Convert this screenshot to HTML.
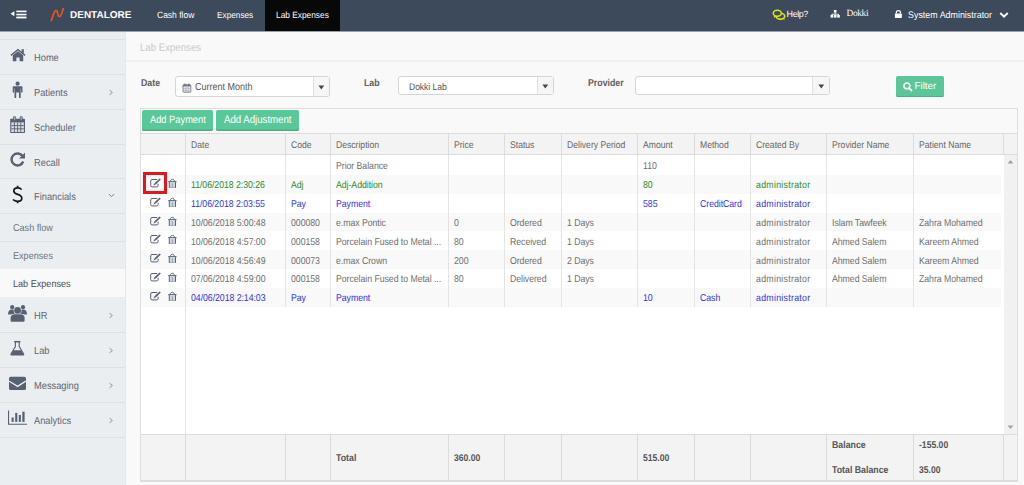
<!DOCTYPE html>
<html><head><meta charset="utf-8"><title>Lab Expenses</title>
<style>
html,body{margin:0;padding:0;width:1024px;height:485px;overflow:hidden;background:#f9f9f9;font-family:"Liberation Sans",sans-serif;}
.t{position:absolute;white-space:nowrap;text-rendering:geometricPrecision;}
.r{position:absolute;}
</style></head><body>
<div class="r" style="left:0px;top:0px;width:1024px;height:31px;background:#3d4a5c"></div>
<div class="r" style="left:0px;top:31px;width:1024px;height:1px;background:#94a0ac"></div>
<svg class="r" style="left:10px;top:10px" width="18" height="10" viewBox="0 0 18 10"><path d="M0.6 3.7 L4.4 1.2 L4.4 6.2 Z" fill="#fff"/><rect x="6.3" y="0.6" width="10.2" height="1.6" fill="#fff"/><rect x="6.3" y="3.75" width="10.2" height="1.6" fill="#fff"/><rect x="6.3" y="6.6" width="10.2" height="1.8" fill="#fff"/></svg>
<svg class="r" style="left:49px;top:6px" width="16" height="17" viewBox="0 0 16 17"><path d="M2.3 14.6 C3.6 11.2 4.6 7.4 5.8 5.4 C6.6 4.2 7.8 4.2 8.3 5.6 C8.9 7.4 8.7 10.4 10.3 10.5 C12.2 10.6 13.2 6.4 14.2 2.6" stroke="#e8561c" stroke-width="1.7" fill="none" stroke-linecap="round"/></svg>
<div class="t" style="left:70.00px;top:8.54px;font-size:10.00px;line-height:14px;color:#fff;font-weight:700;font-family:'Liberation Sans', sans-serif;letter-spacing:0.000px;">DENTALORE</div>
<div class="t" style="left:156.50px;top:7.95px;font-size:9.10px;line-height:14px;color:#fff;font-weight:400;font-family:'Liberation Sans', sans-serif;letter-spacing:0.000px;transform:scaleX(0.9346);transform-origin:0 0;">Cash flow</div>
<div class="t" style="left:217.00px;top:8.04px;font-size:8.83px;line-height:14px;color:#fff;font-weight:400;font-family:'Liberation Sans', sans-serif;letter-spacing:0.000px;transform:scaleX(0.9346);transform-origin:0 0;">Expenses</div>
<div class="r" style="left:265px;top:0px;width:75px;height:31px;background:#080808"></div>
<div class="t" style="left:276.00px;top:8.00px;font-size:8.93px;line-height:14px;color:#fff;font-weight:400;font-family:'Liberation Sans', sans-serif;letter-spacing:0.000px;transform:scaleX(0.9346);transform-origin:0 0;">Lab Expenses</div>
<svg class="r" style="left:772px;top:9px" width="15" height="12" viewBox="0 0 15 12"><ellipse cx="8.4" cy="7.2" rx="4.3" ry="2.9" fill="none" stroke="#e2e619" stroke-width="1.6"/><path d="M10.6 9.6 L12.6 11.2 L12 8.6Z" fill="#e2e619"/><ellipse cx="5.3" cy="4.3" rx="4" ry="3" fill="#3d4a5c" stroke="#e2e619" stroke-width="1.5"/><path d="M2.4 6.6 L1.6 9 L4.4 7.4Z" fill="#e2e619"/></svg>
<div class="t" style="left:786.60px;top:7.28px;font-size:9.00px;line-height:14px;color:#fff;font-weight:400;font-family:'Liberation Sans', sans-serif;letter-spacing:-0.450px;">Help?</div>
<svg class="r" style="left:830px;top:9px" width="11" height="10" viewBox="0 0 11 10"><rect x="3.9" y="1" width="2.6" height="2.6" fill="#fff"/><path d="M5.2 3.6 V5.2 M1.9 6.6 V5.2 H8.5 V6.6" stroke="#fff" stroke-width="0.9" fill="none"/><rect x="0.6" y="6" width="2.6" height="2.6" fill="#fff"/><rect x="3.9" y="6" width="2.6" height="2.6" fill="#fff"/><rect x="7.2" y="6" width="2.6" height="2.6" fill="#fff"/></svg>
<div class="t" style="left:846.50px;top:7.24px;font-size:9.40px;line-height:14px;color:#fff;font-weight:400;font-family:'Liberation Serif', serif;letter-spacing:-0.350px;">Dokki</div>
<svg class="r" style="left:894px;top:9px" width="9" height="10" viewBox="0 0 9 10"><path d="M2.4 4.4 V3.2 C2.4 1.2 6.4 1.2 6.4 3.2 V4.4" stroke="#fff" stroke-width="1.3" fill="none"/><rect x="0.9" y="4.4" width="7" height="4.5" rx="0.6" fill="#fff"/></svg>
<div class="t" style="left:908.00px;top:8.70px;font-size:9.52px;line-height:14px;color:#fff;font-weight:400;font-family:'Liberation Sans', sans-serif;letter-spacing:0.000px;transform:scaleX(0.9346);transform-origin:0 0;">System Administrator</div>
<svg class="r" style="left:999px;top:11px" width="10" height="8" viewBox="0 0 10 8"><path d="M1.3 2 L5 5.6 L8.7 2" stroke="#fff" stroke-width="2" fill="none"/></svg>
<div class="r" style="left:0px;top:32px;width:126px;height:453px;background:#eaeef0"></div>
<div class="r" style="left:125px;top:32px;width:1px;height:453px;background:#e4e8ea"></div>
<div class="r" style="left:0px;top:39px;width:125px;height:1px;background:#dbe1e4"></div>
<div class="r" style="left:0px;top:74px;width:125px;height:1px;background:#dbe1e4"></div>
<div class="r" style="left:0px;top:109px;width:125px;height:1px;background:#dbe1e4"></div>
<div class="r" style="left:0px;top:144px;width:125px;height:1px;background:#dbe1e4"></div>
<div class="r" style="left:0px;top:178px;width:125px;height:1px;background:#dbe1e4"></div>
<div class="r" style="left:0px;top:213px;width:125px;height:1px;background:#dbe1e4"></div>
<div class="r" style="left:0px;top:241px;width:125px;height:1px;background:#dbe1e4"></div>
<div class="r" style="left:0px;top:332px;width:125px;height:1px;background:#dbe1e4"></div>
<div class="r" style="left:0px;top:367px;width:125px;height:1px;background:#dbe1e4"></div>
<div class="r" style="left:0px;top:402px;width:125px;height:1px;background:#dbe1e4"></div>
<div class="r" style="left:0px;top:437px;width:125px;height:1px;background:#dbe1e4"></div>
<div class="t" style="left:33.50px;top:51.66px;font-size:10.23px;line-height:14px;color:#5d6674;font-weight:400;font-family:'Liberation Sans', sans-serif;letter-spacing:0.000px;transform:scaleX(0.9091);transform-origin:0 0;">Home</div>
<div class="t" style="left:33.50px;top:86.66px;font-size:10.23px;line-height:14px;color:#5d6674;font-weight:400;font-family:'Liberation Sans', sans-serif;letter-spacing:0.000px;transform:scaleX(0.9091);transform-origin:0 0;">Patients</div>
<div class="t" style="left:33.50px;top:121.66px;font-size:10.23px;line-height:14px;color:#5d6674;font-weight:400;font-family:'Liberation Sans', sans-serif;letter-spacing:0.000px;transform:scaleX(0.9091);transform-origin:0 0;">Scheduler</div>
<div class="t" style="left:33.50px;top:156.66px;font-size:10.23px;line-height:14px;color:#5d6674;font-weight:400;font-family:'Liberation Sans', sans-serif;letter-spacing:0.000px;transform:scaleX(0.9091);transform-origin:0 0;">Recall</div>
<div class="t" style="left:33.50px;top:190.66px;font-size:10.23px;line-height:14px;color:#5d6674;font-weight:400;font-family:'Liberation Sans', sans-serif;letter-spacing:0.000px;transform:scaleX(0.9091);transform-origin:0 0;">Financials</div>
<svg class="r" style="left:108px;top:89px" width="6" height="7" viewBox="0 0 6 7"><path d="M1.6 1.2 L4.4 3.5 L1.6 5.8" stroke="#8a939e" stroke-width="1" fill="none"/></svg>
<svg class="r" style="left:108px;top:193px" width="7" height="5" viewBox="0 0 7 5"><path d="M1 1 L3.5 3.8 L6 1" stroke="#7d8794" stroke-width="1" fill="none"/></svg>
<div class="t" style="left:12.50px;top:222.43px;font-size:10.01px;line-height:14px;color:#6b737e;font-weight:400;font-family:'Liberation Sans', sans-serif;letter-spacing:0.000px;transform:scaleX(0.9091);transform-origin:0 0;">Cash flow</div>
<div class="t" style="left:12.50px;top:250.43px;font-size:10.01px;line-height:14px;color:#6b737e;font-weight:400;font-family:'Liberation Sans', sans-serif;letter-spacing:0.000px;transform:scaleX(0.9091);transform-origin:0 0;">Expenses</div>
<div class="r" style="left:0px;top:269px;width:125px;height:28px;background:#f9f9f9"></div>
<div class="t" style="left:12.50px;top:277.53px;font-size:10.01px;line-height:14px;color:#4a4f57;font-weight:400;font-family:'Liberation Sans', sans-serif;letter-spacing:0.000px;transform:scaleX(0.9091);transform-origin:0 0;">Lab Expenses</div>
<div class="t" style="left:33.50px;top:309.66px;font-size:10.23px;line-height:14px;color:#5d6674;font-weight:400;font-family:'Liberation Sans', sans-serif;letter-spacing:0.000px;transform:scaleX(0.9091);transform-origin:0 0;">HR</div>
<svg class="r" style="left:108px;top:312px" width="6" height="7" viewBox="0 0 6 7"><path d="M1.6 1.2 L4.4 3.5 L1.6 5.8" stroke="#8a939e" stroke-width="1" fill="none"/></svg>
<div class="t" style="left:33.50px;top:344.66px;font-size:10.23px;line-height:14px;color:#5d6674;font-weight:400;font-family:'Liberation Sans', sans-serif;letter-spacing:0.000px;transform:scaleX(0.9091);transform-origin:0 0;">Lab</div>
<svg class="r" style="left:108px;top:347px" width="6" height="7" viewBox="0 0 6 7"><path d="M1.6 1.2 L4.4 3.5 L1.6 5.8" stroke="#8a939e" stroke-width="1" fill="none"/></svg>
<div class="t" style="left:33.50px;top:379.66px;font-size:10.23px;line-height:14px;color:#5d6674;font-weight:400;font-family:'Liberation Sans', sans-serif;letter-spacing:0.000px;transform:scaleX(0.9091);transform-origin:0 0;">Messaging</div>
<svg class="r" style="left:108px;top:382px" width="6" height="7" viewBox="0 0 6 7"><path d="M1.6 1.2 L4.4 3.5 L1.6 5.8" stroke="#8a939e" stroke-width="1" fill="none"/></svg>
<div class="t" style="left:33.50px;top:414.66px;font-size:10.23px;line-height:14px;color:#5d6674;font-weight:400;font-family:'Liberation Sans', sans-serif;letter-spacing:0.000px;transform:scaleX(0.9091);transform-origin:0 0;">Analytics</div>
<svg class="r" style="left:108px;top:417px" width="6" height="7" viewBox="0 0 6 7"><path d="M1.6 1.2 L4.4 3.5 L1.6 5.8" stroke="#8a939e" stroke-width="1" fill="none"/></svg>
<svg class="r" style="left:10px;top:48px" width="16" height="14" viewBox="0 0 16 14"><path d="M0.5 6.8 L8 0.8 L15.5 6.8 L14.6 7.9 L8 2.6 L1.4 7.9Z" fill="#576171"/><rect x="11.6" y="1.2" width="2.2" height="3.8" fill="#576171"/><path d="M2.8 7.2 L8 3.2 L13.2 7.2 V13.2 H9.6 V9.4 H6.4 V13.2 H2.8Z" fill="#576171"/></svg>
<svg class="r" style="left:12px;top:81px" width="11" height="18" viewBox="0 0 11 18"><circle cx="5.6" cy="2.7" r="2.1" fill="#576171"/><path d="M1.8 5.2 H9.4 C10.1 5.2 10.5 5.6 10.5 6.3 V11.1 C10.5 11.5 10.2 11.7 9.8 11.7 C9.4 11.7 9.1 11.5 9.1 11.1 V7.6 H8.7 V16.4 C8.7 16.8 8.4 17 7.9 17 C7.4 17 7 16.8 7 16.4 V11.6 H4.2 V16.4 C4.2 16.8 3.9 17 3.4 17 C2.9 17 2.5 16.8 2.5 16.4 V7.6 H2.1 V11.1 C2.1 11.5 1.8 11.7 1.4 11.7 C1 11.7 0.7 11.5 0.7 11.1 V6.3 C0.7 5.6 1.1 5.2 1.8 5.2Z" fill="#576171"/></svg>
<svg class="r" style="left:9px;top:116px" width="17" height="18" viewBox="0 0 17 18"><rect x="1.2" y="2.8" width="14.8" height="14.2" rx="0.8" fill="#576171"/><rect x="2.3" y="6.4" width="12.6" height="9.6" fill="#d8dde2"/><path d="M2.3 9.6 H14.9 M2.3 12.8 H14.9 M5.45 6.4 V16 M8.6 6.4 V16 M11.75 6.4 V16" stroke="#576171" stroke-width="0.9"/><rect x="4.4" y="0.4" width="2.2" height="4.2" rx="1" fill="#9aa3ae" stroke="#576171" stroke-width="0.8"/><rect x="11.1" y="0.4" width="2.2" height="4.2" rx="1" fill="#9aa3ae" stroke="#576171" stroke-width="0.8"/></svg>
<svg class="r" style="left:10px;top:152px" width="16" height="15" viewBox="0 0 16 15"><path d="M12.6 4.2 A6 6 0 1 0 13.2 9.5" stroke="#576171" stroke-width="2.4" fill="none"/><path d="M15 0.6 V6.6 H9Z" fill="#576171"/></svg>
<svg class="r" style="left:12px;top:185px" width="11" height="19" viewBox="0 0 11 19"><path d="M9.6 4.6 C8.8 3.4 7.4 2.9 5.7 2.9 C3.3 2.9 1.8 4.1 1.8 5.9 C1.8 8 3.6 8.7 5.7 9.4 C7.9 10.1 9.8 10.9 9.8 13.2 C9.8 15.2 8.1 16.3 5.6 16.3 C3.7 16.3 2 15.7 1 14.5 M5.6 0.8 V2.9 M5.6 16.3 V18.2" stroke="#151515" stroke-width="1.7" fill="none"/></svg>
<svg class="r" style="left:8px;top:304px" width="19" height="18" viewBox="0 0 19 18"><circle cx="4.2" cy="3.2" r="2.1" fill="#576171"/><circle cx="15" cy="3.2" r="2.1" fill="#576171"/><path d="M0 10.6 C0 7.3 1.5 5.6 3.5 5.6 H4.8 C6.6 5.6 7.2 7 7.2 8.5 V10.6 Z" fill="#576171"/><path d="M19 10.6 C19 7.3 17.5 5.6 15.5 5.6 H14.2 C12.4 5.6 11.8 7 11.8 8.5 V10.6Z" fill="#576171"/><circle cx="9.6" cy="6.5" r="3.4" fill="#576171" stroke="#eaeef0" stroke-width="1.1" paint-order="stroke"/><path d="M2.6 16.4 V13.8 C2.6 11.6 4.4 10.2 6.6 10.2 H12.6 C14.8 10.2 16.6 11.6 16.6 13.8 V16.4 C16.6 17.2 16.1 17.8 15.2 17.8 H4 C3.1 17.8 2.6 17.2 2.6 16.4Z" fill="#576171" stroke="#eaeef0" stroke-width="1.1" paint-order="stroke"/></svg>
<svg class="r" style="left:10px;top:340px" width="15" height="16" viewBox="0 0 15 16"><path d="M4.2 1.7 H10.4" stroke="#576171" stroke-width="1.5"/><path d="M5.4 1.8 V6.6 L1.1 13.8 C0.7 14.5 1 15 1.8 15 H12.8 C13.6 15 13.9 14.5 13.5 13.8 L9.2 6.6 V1.8" stroke="#576171" stroke-width="1.1" fill="none"/><path d="M3.5 10.2 H11.1 L13.8 14.6 C13.8 14.9 13.5 15.1 13 15.1 H1.6 C1.1 15.1 0.8 14.9 0.8 14.6Z" fill="#576171"/></svg>
<svg class="r" style="left:9px;top:376px" width="17" height="15" viewBox="0 0 17 15"><rect x="0" y="0.8" width="17" height="13.3" rx="1.6" fill="#576171"/><path d="M0.2 5.2 L8.6 10.4 L16.8 5" stroke="#eaeef0" stroke-width="1.3" fill="none"/></svg>
<svg class="r" style="left:8px;top:410px" width="20" height="15" viewBox="0 0 20 15"><path d="M0.55 0.6 V14.2 H19" stroke="#576171" stroke-width="1.1" fill="none"/><rect x="3.6" y="7.5" width="2.1" height="4.4" fill="#576171"/><rect x="7.2" y="2.9" width="2.1" height="9" fill="#576171"/><rect x="10.8" y="5" width="2.1" height="6.9" fill="#576171"/><rect x="14.3" y="1.7" width="2.3" height="10.2" fill="#576171"/></svg>
<div class="r" style="left:126px;top:32px;width:898px;height:453px;background:#f9f9f9"></div>
<div class="t" style="left:139.60px;top:40.52px;font-size:10.90px;line-height:14px;color:#c9c9c9;font-weight:400;font-family:'Liberation Sans', sans-serif;letter-spacing:0.000px;transform:scaleX(0.8850);transform-origin:0 0;">Lab Expenses</div>
<div class="r" style="left:126px;top:60px;width:898px;height:1px;background:#efefef"></div>
<div class="r" style="left:126px;top:61px;width:898px;height:1px;background:#f1f1f1"></div>
<div class="t" style="left:140.50px;top:76.95px;font-size:9.94px;line-height:14px;color:#606060;font-weight:700;font-family:'Liberation Sans', sans-serif;letter-spacing:0.000px;transform:scaleX(0.8850);transform-origin:0 0;">Date</div>
<div class="r" style="left:175px;top:76px;width:155px;height:21px;background:#fff;border:1px solid #d5d5d5;border-radius:3px;box-sizing:border-box"></div>
<div class="r" style="left:313px;top:77px;width:16px;height:19px;background:#f6f6f6;border-left:1px solid #e0e0e0;border-radius:0 2px 2px 0;box-sizing:border-box"></div>
<svg class="r" style="left:318px;top:84.5px" width="7" height="5" viewBox="0 0 7 5"><path d="M0.4 0.4 H6.2 L3.3 4.6Z" fill="#3d4756"/></svg>
<svg class="r" style="left:182px;top:83px" width="10" height="10" viewBox="0 0 10 10"><rect x="1" y="1.8" width="7.8" height="7.4" rx="0.6" fill="#f4f4f6" stroke="#6f7580" stroke-width="0.9"/><rect x="1" y="1.8" width="7.8" height="1.6" fill="#6f7580"/><path d="M1.3 5.4 H8.5 M1.3 7.3 H8.5 M3.3 3.4 V9 M4.9 3.4 V9 M6.5 3.4 V9" stroke="#a4a9b2" stroke-width="0.6"/><rect x="2.4" y="0.5" width="1.1" height="2" fill="#6f7580"/><rect x="6.3" y="0.5" width="1.1" height="2" fill="#6f7580"/></svg>
<div class="t" style="left:194.50px;top:80.68px;font-size:10.17px;line-height:14px;color:#555;font-weight:400;font-family:'Liberation Sans', sans-serif;letter-spacing:0.000px;transform:scaleX(0.8850);transform-origin:0 0;">Current Month</div>
<div class="t" style="left:364.00px;top:76.95px;font-size:9.94px;line-height:14px;color:#606060;font-weight:700;font-family:'Liberation Sans', sans-serif;letter-spacing:0.000px;transform:scaleX(0.8850);transform-origin:0 0;">Lab</div>
<div class="r" style="left:398px;top:76px;width:156px;height:19px;background:#fff;border:1px solid #d5d5d5;border-radius:3px;box-sizing:border-box"></div>
<div class="r" style="left:537px;top:77px;width:16px;height:17px;background:#f6f6f6;border-left:1px solid #e0e0e0;border-radius:0 2px 2px 0;box-sizing:border-box"></div>
<svg class="r" style="left:542px;top:83.5px" width="7" height="5" viewBox="0 0 7 5"><path d="M0.4 0.4 H6.2 L3.3 4.6Z" fill="#3d4756"/></svg>
<div class="t" style="left:408.50px;top:80.57px;font-size:9.60px;line-height:14px;color:#555;font-weight:400;font-family:'Liberation Sans', sans-serif;letter-spacing:0.000px;transform:scaleX(0.8850);transform-origin:0 0;">Dokki Lab</div>
<div class="t" style="left:588.00px;top:76.95px;font-size:9.94px;line-height:14px;color:#606060;font-weight:700;font-family:'Liberation Sans', sans-serif;letter-spacing:0.000px;transform:scaleX(0.8850);transform-origin:0 0;">Provider</div>
<div class="r" style="left:635px;top:76px;width:195px;height:19px;background:#fff;border:1px solid #d5d5d5;border-radius:3px;box-sizing:border-box"></div>
<div class="r" style="left:812px;top:77px;width:17px;height:17px;background:#f6f6f6;border-left:1px solid #e0e0e0;border-radius:0 2px 2px 0;box-sizing:border-box"></div>
<svg class="r" style="left:818px;top:83.5px" width="7" height="5" viewBox="0 0 7 5"><path d="M0.4 0.4 H6.2 L3.3 4.6Z" fill="#3d4756"/></svg>
<div class="r" style="left:896px;top:76px;width:48px;height:21px;background:#5ac79a;border-radius:2px;box-shadow:inset 0 -1px 0 #46b283"></div>
<svg class="r" style="left:903px;top:82px" width="10" height="10" viewBox="0 0 10 10"><circle cx="3.9" cy="3.9" r="2.9" stroke="#fff" stroke-width="1.5" fill="none"/><path d="M6 6 L9 9" stroke="#fff" stroke-width="1.8"/></svg>
<div class="t" style="left:914.50px;top:80.20px;font-size:9.80px;line-height:14px;color:#fff;font-weight:400;font-family:'Liberation Sans', sans-serif;letter-spacing:0.000px;">Filter</div>
<div class="r" style="left:140px;top:108px;width:878px;height:374px;background:#f4f4f4;border:1px solid #dedede;box-sizing:border-box;background-image:linear-gradient(#f9f9f9,#f1f1f1);"></div>
<div class="r" style="left:142px;top:110px;width:71px;height:21px;background:#5ac79a;border-radius:2px;box-shadow:inset 0 -1.5px 0 #45b183"></div>
<div class="t" style="left:149.70px;top:112.76px;font-size:10.51px;line-height:14px;color:#fff;font-weight:400;font-family:'Liberation Sans', sans-serif;letter-spacing:0.000px;transform:scaleX(0.8850);transform-origin:0 0;">Add Payment</div>
<div class="r" style="left:216px;top:110px;width:83px;height:21px;background:#5ac79a;border-radius:2px;box-shadow:inset 0 -1.5px 0 #45b183"></div>
<div class="t" style="left:223.50px;top:112.62px;font-size:10.90px;line-height:14px;color:#fff;font-weight:400;font-family:'Liberation Sans', sans-serif;letter-spacing:0.000px;transform:scaleX(0.8850);transform-origin:0 0;">Add Adjustment</div>
<div class="r" style="left:141px;top:133px;width:876px;height:22px;background:#f3f3f3;border-top:1px solid #dcdcdc;border-bottom:1px solid #dcdcdc;box-sizing:border-box"></div>
<div class="r" style="left:185px;top:133px;width:1px;height:22px;background:#dcdcdc"></div>
<div class="r" style="left:285px;top:133px;width:1px;height:22px;background:#dcdcdc"></div>
<div class="r" style="left:330px;top:133px;width:1px;height:22px;background:#dcdcdc"></div>
<div class="r" style="left:448px;top:133px;width:1px;height:22px;background:#dcdcdc"></div>
<div class="r" style="left:504px;top:133px;width:1px;height:22px;background:#dcdcdc"></div>
<div class="r" style="left:561px;top:133px;width:1px;height:22px;background:#dcdcdc"></div>
<div class="r" style="left:637px;top:133px;width:1px;height:22px;background:#dcdcdc"></div>
<div class="r" style="left:694px;top:133px;width:1px;height:22px;background:#dcdcdc"></div>
<div class="r" style="left:750px;top:133px;width:1px;height:22px;background:#dcdcdc"></div>
<div class="r" style="left:826px;top:133px;width:1px;height:22px;background:#dcdcdc"></div>
<div class="r" style="left:913px;top:133px;width:1px;height:22px;background:#dcdcdc"></div>
<div class="r" style="left:1003px;top:133px;width:1px;height:22px;background:#dcdcdc"></div>
<div class="t" style="left:190.60px;top:139.03px;font-size:9.72px;line-height:14px;color:#666;font-weight:400;font-family:'Liberation Sans', sans-serif;letter-spacing:0.000px;transform:scaleX(0.8850);transform-origin:0 0;">Date</div>
<div class="t" style="left:290.60px;top:139.03px;font-size:9.72px;line-height:14px;color:#666;font-weight:400;font-family:'Liberation Sans', sans-serif;letter-spacing:0.000px;transform:scaleX(0.8850);transform-origin:0 0;">Code</div>
<div class="t" style="left:335.60px;top:139.03px;font-size:9.72px;line-height:14px;color:#666;font-weight:400;font-family:'Liberation Sans', sans-serif;letter-spacing:0.000px;transform:scaleX(0.8850);transform-origin:0 0;">Description</div>
<div class="t" style="left:453.60px;top:139.03px;font-size:9.72px;line-height:14px;color:#666;font-weight:400;font-family:'Liberation Sans', sans-serif;letter-spacing:0.000px;transform:scaleX(0.8850);transform-origin:0 0;">Price</div>
<div class="t" style="left:509.60px;top:139.03px;font-size:9.72px;line-height:14px;color:#666;font-weight:400;font-family:'Liberation Sans', sans-serif;letter-spacing:0.000px;transform:scaleX(0.8850);transform-origin:0 0;">Status</div>
<div class="t" style="left:566.60px;top:139.03px;font-size:9.72px;line-height:14px;color:#666;font-weight:400;font-family:'Liberation Sans', sans-serif;letter-spacing:0.000px;transform:scaleX(0.8850);transform-origin:0 0;">Delivery Period</div>
<div class="t" style="left:642.60px;top:139.03px;font-size:9.72px;line-height:14px;color:#666;font-weight:400;font-family:'Liberation Sans', sans-serif;letter-spacing:0.000px;transform:scaleX(0.8850);transform-origin:0 0;">Amount</div>
<div class="t" style="left:699.60px;top:139.03px;font-size:9.72px;line-height:14px;color:#666;font-weight:400;font-family:'Liberation Sans', sans-serif;letter-spacing:0.000px;transform:scaleX(0.8850);transform-origin:0 0;">Method</div>
<div class="t" style="left:755.60px;top:139.03px;font-size:9.72px;line-height:14px;color:#666;font-weight:400;font-family:'Liberation Sans', sans-serif;letter-spacing:0.000px;transform:scaleX(0.8850);transform-origin:0 0;">Created By</div>
<div class="t" style="left:831.60px;top:139.03px;font-size:9.72px;line-height:14px;color:#666;font-weight:400;font-family:'Liberation Sans', sans-serif;letter-spacing:0.000px;transform:scaleX(0.8850);transform-origin:0 0;">Provider Name</div>
<div class="t" style="left:918.60px;top:139.03px;font-size:9.72px;line-height:14px;color:#666;font-weight:400;font-family:'Liberation Sans', sans-serif;letter-spacing:0.000px;transform:scaleX(0.8850);transform-origin:0 0;">Patient Name</div>
<div class="r" style="left:141px;top:155px;width:876px;height:279px;background:#fff"></div>
<div class="r" style="left:1004px;top:155px;width:13px;height:279px;background:#f1f1f1"></div>
<svg class="r" style="left:1007px;top:159px" width="7" height="5" viewBox="0 0 7 5"><path d="M0.6 4.4 L3.5 1 L6.4 4.4Z" fill="#a3a3a3"/></svg>
<svg class="r" style="left:1007px;top:425px" width="7" height="5" viewBox="0 0 7 5"><path d="M0.6 0.6 L3.5 4 L6.4 0.6Z" fill="#a3a3a3"/></svg>
<div class="r" style="left:185px;top:155px;width:1px;height:20px;background:#e4e4e4"></div>
<div class="r" style="left:285px;top:155px;width:1px;height:20px;background:#e4e4e4"></div>
<div class="r" style="left:330px;top:155px;width:1px;height:20px;background:#e4e4e4"></div>
<div class="r" style="left:448px;top:155px;width:1px;height:20px;background:#e4e4e4"></div>
<div class="r" style="left:504px;top:155px;width:1px;height:20px;background:#e4e4e4"></div>
<div class="r" style="left:561px;top:155px;width:1px;height:20px;background:#e4e4e4"></div>
<div class="r" style="left:637px;top:155px;width:1px;height:20px;background:#e4e4e4"></div>
<div class="r" style="left:694px;top:155px;width:1px;height:20px;background:#e4e4e4"></div>
<div class="r" style="left:750px;top:155px;width:1px;height:20px;background:#e4e4e4"></div>
<div class="r" style="left:826px;top:155px;width:1px;height:20px;background:#e4e4e4"></div>
<div class="r" style="left:913px;top:155px;width:1px;height:20px;background:#e4e4e4"></div>
<div class="t" style="left:335.90px;top:159.64px;font-size:9.97px;line-height:14px;color:#6e6e6e;font-weight:400;font-family:'Liberation Sans', sans-serif;letter-spacing:-0.057px;transform:scaleX(0.8772);transform-origin:0 0;">Prior Balance</div>
<div class="t" style="left:642.90px;top:159.64px;font-size:9.97px;line-height:14px;color:#6e6e6e;font-weight:400;font-family:'Liberation Sans', sans-serif;letter-spacing:-0.057px;transform:scaleX(0.8772);transform-origin:0 0;">110</div>
<div class="r" style="left:141px;top:175px;width:860px;height:19px;background:#f9f9f9"></div>
<div class="r" style="left:185px;top:175px;width:1px;height:19px;background:#e4e4e4"></div>
<div class="r" style="left:285px;top:175px;width:1px;height:19px;background:#e4e4e4"></div>
<div class="r" style="left:330px;top:175px;width:1px;height:19px;background:#e4e4e4"></div>
<div class="r" style="left:448px;top:175px;width:1px;height:19px;background:#e4e4e4"></div>
<div class="r" style="left:504px;top:175px;width:1px;height:19px;background:#e4e4e4"></div>
<div class="r" style="left:561px;top:175px;width:1px;height:19px;background:#e4e4e4"></div>
<div class="r" style="left:637px;top:175px;width:1px;height:19px;background:#e4e4e4"></div>
<div class="r" style="left:694px;top:175px;width:1px;height:19px;background:#e4e4e4"></div>
<div class="r" style="left:750px;top:175px;width:1px;height:19px;background:#e4e4e4"></div>
<div class="r" style="left:826px;top:175px;width:1px;height:19px;background:#e4e4e4"></div>
<div class="r" style="left:913px;top:175px;width:1px;height:19px;background:#e4e4e4"></div>
<svg class="r" style="left:150px;top:178.4px" width="11" height="10" viewBox="0 0 11 10"><path d="M7.2 1.5 H2 C1.2 1.5 0.7 2 0.7 2.8 V7.6 C0.7 8.4 1.2 8.9 2 8.9 H6.8 C7.6 8.9 8.1 8.4 8.1 7.6 V5.8" stroke="#596171" stroke-width="1" fill="none"/><path d="M9.6 0.4 L10.8 1.6 L5.6 6.8 L3.5 7.5 L4.2 5.4Z" fill="#596171"/><path d="M4.2 5.4 L5.6 6.8" stroke="#fff" stroke-width="0.5"/></svg>
<svg class="r" style="left:168px;top:178px" width="9" height="10" viewBox="0 0 9 10"><g transform="translate(0,0.8)"><path d="M2.4 2.5 C2.7 1.1 3.4 0.5 4.4 0.5 C5.4 0.5 6.1 1.1 6.4 2.5" stroke="#596171" stroke-width="1" fill="none"/><path d="M0.3 2.9 H8.5" stroke="#596171" stroke-width="1.2"/><path d="M1.3 3.3 V8.7 C1.3 9.1 1.6 9.4 2 9.4 H6.8 C7.2 9.4 7.5 9.1 7.5 8.7 V3.3" stroke="#596171" stroke-width="1" fill="#cfd6e0"/><path d="M4.4 4.4 V8.4" stroke="#8a93a3" stroke-width="0.8"/></g></svg>
<div class="t" style="left:190.90px;top:179.04px;font-size:9.97px;line-height:14px;color:#2f8a2f;font-weight:400;font-family:'Liberation Sans', sans-serif;letter-spacing:-0.057px;transform:scaleX(0.8772);transform-origin:0 0;">11/06/2018 2:30:26</div>
<div class="t" style="left:290.90px;top:179.04px;font-size:9.97px;line-height:14px;color:#2f8a2f;font-weight:400;font-family:'Liberation Sans', sans-serif;letter-spacing:-0.057px;transform:scaleX(0.8772);transform-origin:0 0;">Adj</div>
<div class="t" style="left:335.90px;top:179.04px;font-size:9.97px;line-height:14px;color:#2f8a2f;font-weight:400;font-family:'Liberation Sans', sans-serif;letter-spacing:-0.057px;transform:scaleX(0.8772);transform-origin:0 0;">Adj-Addition</div>
<div class="t" style="left:642.90px;top:179.04px;font-size:9.97px;line-height:14px;color:#2f8a2f;font-weight:400;font-family:'Liberation Sans', sans-serif;letter-spacing:-0.057px;transform:scaleX(0.8772);transform-origin:0 0;">80</div>
<div class="t" style="left:755.90px;top:179.04px;font-size:9.97px;line-height:14px;color:#2f8a2f;font-weight:400;font-family:'Liberation Sans', sans-serif;letter-spacing:0.342px;transform:scaleX(0.8772);transform-origin:0 0;">administrator</div>
<div class="r" style="left:185px;top:194px;width:1px;height:19px;background:#e4e4e4"></div>
<div class="r" style="left:285px;top:194px;width:1px;height:19px;background:#e4e4e4"></div>
<div class="r" style="left:330px;top:194px;width:1px;height:19px;background:#e4e4e4"></div>
<div class="r" style="left:448px;top:194px;width:1px;height:19px;background:#e4e4e4"></div>
<div class="r" style="left:504px;top:194px;width:1px;height:19px;background:#e4e4e4"></div>
<div class="r" style="left:561px;top:194px;width:1px;height:19px;background:#e4e4e4"></div>
<div class="r" style="left:637px;top:194px;width:1px;height:19px;background:#e4e4e4"></div>
<div class="r" style="left:694px;top:194px;width:1px;height:19px;background:#e4e4e4"></div>
<div class="r" style="left:750px;top:194px;width:1px;height:19px;background:#e4e4e4"></div>
<div class="r" style="left:826px;top:194px;width:1px;height:19px;background:#e4e4e4"></div>
<div class="r" style="left:913px;top:194px;width:1px;height:19px;background:#e4e4e4"></div>
<svg class="r" style="left:150px;top:197.4px" width="11" height="10" viewBox="0 0 11 10"><path d="M7.2 1.5 H2 C1.2 1.5 0.7 2 0.7 2.8 V7.6 C0.7 8.4 1.2 8.9 2 8.9 H6.8 C7.6 8.9 8.1 8.4 8.1 7.6 V5.8" stroke="#596171" stroke-width="1" fill="none"/><path d="M9.6 0.4 L10.8 1.6 L5.6 6.8 L3.5 7.5 L4.2 5.4Z" fill="#596171"/><path d="M4.2 5.4 L5.6 6.8" stroke="#fff" stroke-width="0.5"/></svg>
<svg class="r" style="left:168px;top:197px" width="9" height="10" viewBox="0 0 9 10"><g transform="translate(0,0.8)"><path d="M2.4 2.5 C2.7 1.1 3.4 0.5 4.4 0.5 C5.4 0.5 6.1 1.1 6.4 2.5" stroke="#596171" stroke-width="1" fill="none"/><path d="M0.3 2.9 H8.5" stroke="#596171" stroke-width="1.2"/><path d="M1.3 3.3 V8.7 C1.3 9.1 1.6 9.4 2 9.4 H6.8 C7.2 9.4 7.5 9.1 7.5 8.7 V3.3" stroke="#596171" stroke-width="1" fill="#cfd6e0"/><path d="M4.4 4.4 V8.4" stroke="#8a93a3" stroke-width="0.8"/></g></svg>
<div class="t" style="left:190.90px;top:197.93px;font-size:9.97px;line-height:14px;color:#3232ee;font-weight:400;font-family:'Liberation Sans', sans-serif;letter-spacing:-0.057px;transform:scaleX(0.8772);transform-origin:0 0;">11/06/2018 2:03:55</div>
<div class="t" style="left:290.90px;top:197.93px;font-size:9.97px;line-height:14px;color:#3232ee;font-weight:400;font-family:'Liberation Sans', sans-serif;letter-spacing:-0.057px;transform:scaleX(0.8772);transform-origin:0 0;">Pay</div>
<div class="t" style="left:335.90px;top:197.93px;font-size:9.97px;line-height:14px;color:#3232ee;font-weight:400;font-family:'Liberation Sans', sans-serif;letter-spacing:-0.057px;transform:scaleX(0.8772);transform-origin:0 0;">Payment</div>
<div class="t" style="left:642.90px;top:197.93px;font-size:9.97px;line-height:14px;color:#3232ee;font-weight:400;font-family:'Liberation Sans', sans-serif;letter-spacing:-0.057px;transform:scaleX(0.8772);transform-origin:0 0;">585</div>
<div class="t" style="left:699.90px;top:197.93px;font-size:9.97px;line-height:14px;color:#3232ee;font-weight:400;font-family:'Liberation Sans', sans-serif;letter-spacing:-0.057px;transform:scaleX(0.8772);transform-origin:0 0;">CreditCard</div>
<div class="t" style="left:755.90px;top:197.93px;font-size:9.97px;line-height:14px;color:#3232ee;font-weight:400;font-family:'Liberation Sans', sans-serif;letter-spacing:0.342px;transform:scaleX(0.8772);transform-origin:0 0;">administrator</div>
<div class="r" style="left:141px;top:213px;width:860px;height:18px;background:#f9f9f9"></div>
<div class="r" style="left:185px;top:213px;width:1px;height:18px;background:#e4e4e4"></div>
<div class="r" style="left:285px;top:213px;width:1px;height:18px;background:#e4e4e4"></div>
<div class="r" style="left:330px;top:213px;width:1px;height:18px;background:#e4e4e4"></div>
<div class="r" style="left:448px;top:213px;width:1px;height:18px;background:#e4e4e4"></div>
<div class="r" style="left:504px;top:213px;width:1px;height:18px;background:#e4e4e4"></div>
<div class="r" style="left:561px;top:213px;width:1px;height:18px;background:#e4e4e4"></div>
<div class="r" style="left:637px;top:213px;width:1px;height:18px;background:#e4e4e4"></div>
<div class="r" style="left:694px;top:213px;width:1px;height:18px;background:#e4e4e4"></div>
<div class="r" style="left:750px;top:213px;width:1px;height:18px;background:#e4e4e4"></div>
<div class="r" style="left:826px;top:213px;width:1px;height:18px;background:#e4e4e4"></div>
<div class="r" style="left:913px;top:213px;width:1px;height:18px;background:#e4e4e4"></div>
<svg class="r" style="left:150px;top:216.4px" width="11" height="10" viewBox="0 0 11 10"><path d="M7.2 1.5 H2 C1.2 1.5 0.7 2 0.7 2.8 V7.6 C0.7 8.4 1.2 8.9 2 8.9 H6.8 C7.6 8.9 8.1 8.4 8.1 7.6 V5.8" stroke="#596171" stroke-width="1" fill="none"/><path d="M9.6 0.4 L10.8 1.6 L5.6 6.8 L3.5 7.5 L4.2 5.4Z" fill="#596171"/><path d="M4.2 5.4 L5.6 6.8" stroke="#fff" stroke-width="0.5"/></svg>
<svg class="r" style="left:168px;top:216px" width="9" height="10" viewBox="0 0 9 10"><g transform="translate(0,0.8)"><path d="M2.4 2.5 C2.7 1.1 3.4 0.5 4.4 0.5 C5.4 0.5 6.1 1.1 6.4 2.5" stroke="#596171" stroke-width="1" fill="none"/><path d="M0.3 2.9 H8.5" stroke="#596171" stroke-width="1.2"/><path d="M1.3 3.3 V8.7 C1.3 9.1 1.6 9.4 2 9.4 H6.8 C7.2 9.4 7.5 9.1 7.5 8.7 V3.3" stroke="#596171" stroke-width="1" fill="#cfd6e0"/><path d="M4.4 4.4 V8.4" stroke="#8a93a3" stroke-width="0.8"/></g></svg>
<div class="t" style="left:190.90px;top:216.82px;font-size:9.97px;line-height:14px;color:#6e6e6e;font-weight:400;font-family:'Liberation Sans', sans-serif;letter-spacing:-0.057px;transform:scaleX(0.8772);transform-origin:0 0;">10/06/2018 5:00:48</div>
<div class="t" style="left:290.90px;top:216.82px;font-size:9.97px;line-height:14px;color:#6e6e6e;font-weight:400;font-family:'Liberation Sans', sans-serif;letter-spacing:-0.057px;transform:scaleX(0.8772);transform-origin:0 0;">000080</div>
<div class="t" style="left:335.90px;top:216.82px;font-size:9.97px;line-height:14px;color:#6e6e6e;font-weight:400;font-family:'Liberation Sans', sans-serif;letter-spacing:-0.057px;transform:scaleX(0.8772);transform-origin:0 0;">e.max Pontic</div>
<div class="t" style="left:453.90px;top:216.82px;font-size:9.97px;line-height:14px;color:#6e6e6e;font-weight:400;font-family:'Liberation Sans', sans-serif;letter-spacing:-0.057px;transform:scaleX(0.8772);transform-origin:0 0;">0</div>
<div class="t" style="left:509.90px;top:216.82px;font-size:9.97px;line-height:14px;color:#6e6e6e;font-weight:400;font-family:'Liberation Sans', sans-serif;letter-spacing:-0.057px;transform:scaleX(0.8772);transform-origin:0 0;">Ordered</div>
<div class="t" style="left:566.90px;top:216.82px;font-size:9.97px;line-height:14px;color:#6e6e6e;font-weight:400;font-family:'Liberation Sans', sans-serif;letter-spacing:-0.057px;transform:scaleX(0.8772);transform-origin:0 0;">1 Days</div>
<div class="t" style="left:755.90px;top:216.82px;font-size:9.97px;line-height:14px;color:#6e6e6e;font-weight:400;font-family:'Liberation Sans', sans-serif;letter-spacing:0.342px;transform:scaleX(0.8772);transform-origin:0 0;">administrator</div>
<div class="t" style="left:831.90px;top:216.82px;font-size:9.97px;line-height:14px;color:#6e6e6e;font-weight:400;font-family:'Liberation Sans', sans-serif;letter-spacing:-0.057px;transform:scaleX(0.8772);transform-origin:0 0;">Islam Tawfeek</div>
<div class="t" style="left:918.90px;top:216.82px;font-size:9.97px;line-height:14px;color:#6e6e6e;font-weight:400;font-family:'Liberation Sans', sans-serif;letter-spacing:-0.057px;transform:scaleX(0.8772);transform-origin:0 0;">Zahra Mohamed</div>
<div class="r" style="left:185px;top:231px;width:1px;height:19px;background:#e4e4e4"></div>
<div class="r" style="left:285px;top:231px;width:1px;height:19px;background:#e4e4e4"></div>
<div class="r" style="left:330px;top:231px;width:1px;height:19px;background:#e4e4e4"></div>
<div class="r" style="left:448px;top:231px;width:1px;height:19px;background:#e4e4e4"></div>
<div class="r" style="left:504px;top:231px;width:1px;height:19px;background:#e4e4e4"></div>
<div class="r" style="left:561px;top:231px;width:1px;height:19px;background:#e4e4e4"></div>
<div class="r" style="left:637px;top:231px;width:1px;height:19px;background:#e4e4e4"></div>
<div class="r" style="left:694px;top:231px;width:1px;height:19px;background:#e4e4e4"></div>
<div class="r" style="left:750px;top:231px;width:1px;height:19px;background:#e4e4e4"></div>
<div class="r" style="left:826px;top:231px;width:1px;height:19px;background:#e4e4e4"></div>
<div class="r" style="left:913px;top:231px;width:1px;height:19px;background:#e4e4e4"></div>
<svg class="r" style="left:150px;top:234.4px" width="11" height="10" viewBox="0 0 11 10"><path d="M7.2 1.5 H2 C1.2 1.5 0.7 2 0.7 2.8 V7.6 C0.7 8.4 1.2 8.9 2 8.9 H6.8 C7.6 8.9 8.1 8.4 8.1 7.6 V5.8" stroke="#596171" stroke-width="1" fill="none"/><path d="M9.6 0.4 L10.8 1.6 L5.6 6.8 L3.5 7.5 L4.2 5.4Z" fill="#596171"/><path d="M4.2 5.4 L5.6 6.8" stroke="#fff" stroke-width="0.5"/></svg>
<svg class="r" style="left:168px;top:234px" width="9" height="10" viewBox="0 0 9 10"><g transform="translate(0,0.8)"><path d="M2.4 2.5 C2.7 1.1 3.4 0.5 4.4 0.5 C5.4 0.5 6.1 1.1 6.4 2.5" stroke="#596171" stroke-width="1" fill="none"/><path d="M0.3 2.9 H8.5" stroke="#596171" stroke-width="1.2"/><path d="M1.3 3.3 V8.7 C1.3 9.1 1.6 9.4 2 9.4 H6.8 C7.2 9.4 7.5 9.1 7.5 8.7 V3.3" stroke="#596171" stroke-width="1" fill="#cfd6e0"/><path d="M4.4 4.4 V8.4" stroke="#8a93a3" stroke-width="0.8"/></g></svg>
<div class="t" style="left:190.90px;top:235.71px;font-size:9.97px;line-height:14px;color:#6e6e6e;font-weight:400;font-family:'Liberation Sans', sans-serif;letter-spacing:-0.057px;transform:scaleX(0.8772);transform-origin:0 0;">10/06/2018 4:57:00</div>
<div class="t" style="left:290.90px;top:235.71px;font-size:9.97px;line-height:14px;color:#6e6e6e;font-weight:400;font-family:'Liberation Sans', sans-serif;letter-spacing:-0.057px;transform:scaleX(0.8772);transform-origin:0 0;">000158</div>
<div class="t" style="left:335.90px;top:235.71px;font-size:9.97px;line-height:14px;color:#6e6e6e;font-weight:400;font-family:'Liberation Sans', sans-serif;letter-spacing:-0.057px;transform:scaleX(0.8772);transform-origin:0 0;">Porcelain Fused to Metal ...</div>
<div class="t" style="left:453.90px;top:235.71px;font-size:9.97px;line-height:14px;color:#6e6e6e;font-weight:400;font-family:'Liberation Sans', sans-serif;letter-spacing:-0.057px;transform:scaleX(0.8772);transform-origin:0 0;">80</div>
<div class="t" style="left:509.90px;top:235.71px;font-size:9.97px;line-height:14px;color:#6e6e6e;font-weight:400;font-family:'Liberation Sans', sans-serif;letter-spacing:-0.057px;transform:scaleX(0.8772);transform-origin:0 0;">Received</div>
<div class="t" style="left:566.90px;top:235.71px;font-size:9.97px;line-height:14px;color:#6e6e6e;font-weight:400;font-family:'Liberation Sans', sans-serif;letter-spacing:-0.057px;transform:scaleX(0.8772);transform-origin:0 0;">1 Days</div>
<div class="t" style="left:755.90px;top:235.71px;font-size:9.97px;line-height:14px;color:#6e6e6e;font-weight:400;font-family:'Liberation Sans', sans-serif;letter-spacing:0.342px;transform:scaleX(0.8772);transform-origin:0 0;">administrator</div>
<div class="t" style="left:831.90px;top:235.71px;font-size:9.97px;line-height:14px;color:#6e6e6e;font-weight:400;font-family:'Liberation Sans', sans-serif;letter-spacing:-0.057px;transform:scaleX(0.8772);transform-origin:0 0;">Ahmed Salem</div>
<div class="t" style="left:918.90px;top:235.71px;font-size:9.97px;line-height:14px;color:#6e6e6e;font-weight:400;font-family:'Liberation Sans', sans-serif;letter-spacing:-0.057px;transform:scaleX(0.8772);transform-origin:0 0;">Kareem Ahmed</div>
<div class="r" style="left:141px;top:250px;width:860px;height:19px;background:#f9f9f9"></div>
<div class="r" style="left:185px;top:250px;width:1px;height:19px;background:#e4e4e4"></div>
<div class="r" style="left:285px;top:250px;width:1px;height:19px;background:#e4e4e4"></div>
<div class="r" style="left:330px;top:250px;width:1px;height:19px;background:#e4e4e4"></div>
<div class="r" style="left:448px;top:250px;width:1px;height:19px;background:#e4e4e4"></div>
<div class="r" style="left:504px;top:250px;width:1px;height:19px;background:#e4e4e4"></div>
<div class="r" style="left:561px;top:250px;width:1px;height:19px;background:#e4e4e4"></div>
<div class="r" style="left:637px;top:250px;width:1px;height:19px;background:#e4e4e4"></div>
<div class="r" style="left:694px;top:250px;width:1px;height:19px;background:#e4e4e4"></div>
<div class="r" style="left:750px;top:250px;width:1px;height:19px;background:#e4e4e4"></div>
<div class="r" style="left:826px;top:250px;width:1px;height:19px;background:#e4e4e4"></div>
<div class="r" style="left:913px;top:250px;width:1px;height:19px;background:#e4e4e4"></div>
<svg class="r" style="left:150px;top:253.4px" width="11" height="10" viewBox="0 0 11 10"><path d="M7.2 1.5 H2 C1.2 1.5 0.7 2 0.7 2.8 V7.6 C0.7 8.4 1.2 8.9 2 8.9 H6.8 C7.6 8.9 8.1 8.4 8.1 7.6 V5.8" stroke="#596171" stroke-width="1" fill="none"/><path d="M9.6 0.4 L10.8 1.6 L5.6 6.8 L3.5 7.5 L4.2 5.4Z" fill="#596171"/><path d="M4.2 5.4 L5.6 6.8" stroke="#fff" stroke-width="0.5"/></svg>
<svg class="r" style="left:168px;top:253px" width="9" height="10" viewBox="0 0 9 10"><g transform="translate(0,0.8)"><path d="M2.4 2.5 C2.7 1.1 3.4 0.5 4.4 0.5 C5.4 0.5 6.1 1.1 6.4 2.5" stroke="#596171" stroke-width="1" fill="none"/><path d="M0.3 2.9 H8.5" stroke="#596171" stroke-width="1.2"/><path d="M1.3 3.3 V8.7 C1.3 9.1 1.6 9.4 2 9.4 H6.8 C7.2 9.4 7.5 9.1 7.5 8.7 V3.3" stroke="#596171" stroke-width="1" fill="#cfd6e0"/><path d="M4.4 4.4 V8.4" stroke="#8a93a3" stroke-width="0.8"/></g></svg>
<div class="t" style="left:190.90px;top:254.60px;font-size:9.97px;line-height:14px;color:#6e6e6e;font-weight:400;font-family:'Liberation Sans', sans-serif;letter-spacing:-0.057px;transform:scaleX(0.8772);transform-origin:0 0;">10/06/2018 4:56:49</div>
<div class="t" style="left:290.90px;top:254.60px;font-size:9.97px;line-height:14px;color:#6e6e6e;font-weight:400;font-family:'Liberation Sans', sans-serif;letter-spacing:-0.057px;transform:scaleX(0.8772);transform-origin:0 0;">000073</div>
<div class="t" style="left:335.90px;top:254.60px;font-size:9.97px;line-height:14px;color:#6e6e6e;font-weight:400;font-family:'Liberation Sans', sans-serif;letter-spacing:-0.057px;transform:scaleX(0.8772);transform-origin:0 0;">e.max Crown</div>
<div class="t" style="left:453.90px;top:254.60px;font-size:9.97px;line-height:14px;color:#6e6e6e;font-weight:400;font-family:'Liberation Sans', sans-serif;letter-spacing:-0.057px;transform:scaleX(0.8772);transform-origin:0 0;">200</div>
<div class="t" style="left:509.90px;top:254.60px;font-size:9.97px;line-height:14px;color:#6e6e6e;font-weight:400;font-family:'Liberation Sans', sans-serif;letter-spacing:-0.057px;transform:scaleX(0.8772);transform-origin:0 0;">Ordered</div>
<div class="t" style="left:566.90px;top:254.60px;font-size:9.97px;line-height:14px;color:#6e6e6e;font-weight:400;font-family:'Liberation Sans', sans-serif;letter-spacing:-0.057px;transform:scaleX(0.8772);transform-origin:0 0;">2 Days</div>
<div class="t" style="left:755.90px;top:254.60px;font-size:9.97px;line-height:14px;color:#6e6e6e;font-weight:400;font-family:'Liberation Sans', sans-serif;letter-spacing:0.342px;transform:scaleX(0.8772);transform-origin:0 0;">administrator</div>
<div class="t" style="left:831.90px;top:254.60px;font-size:9.97px;line-height:14px;color:#6e6e6e;font-weight:400;font-family:'Liberation Sans', sans-serif;letter-spacing:-0.057px;transform:scaleX(0.8772);transform-origin:0 0;">Ahmed Salem</div>
<div class="t" style="left:918.90px;top:254.60px;font-size:9.97px;line-height:14px;color:#6e6e6e;font-weight:400;font-family:'Liberation Sans', sans-serif;letter-spacing:-0.057px;transform:scaleX(0.8772);transform-origin:0 0;">Kareem Ahmed</div>
<div class="r" style="left:185px;top:269px;width:1px;height:19px;background:#e4e4e4"></div>
<div class="r" style="left:285px;top:269px;width:1px;height:19px;background:#e4e4e4"></div>
<div class="r" style="left:330px;top:269px;width:1px;height:19px;background:#e4e4e4"></div>
<div class="r" style="left:448px;top:269px;width:1px;height:19px;background:#e4e4e4"></div>
<div class="r" style="left:504px;top:269px;width:1px;height:19px;background:#e4e4e4"></div>
<div class="r" style="left:561px;top:269px;width:1px;height:19px;background:#e4e4e4"></div>
<div class="r" style="left:637px;top:269px;width:1px;height:19px;background:#e4e4e4"></div>
<div class="r" style="left:694px;top:269px;width:1px;height:19px;background:#e4e4e4"></div>
<div class="r" style="left:750px;top:269px;width:1px;height:19px;background:#e4e4e4"></div>
<div class="r" style="left:826px;top:269px;width:1px;height:19px;background:#e4e4e4"></div>
<div class="r" style="left:913px;top:269px;width:1px;height:19px;background:#e4e4e4"></div>
<svg class="r" style="left:150px;top:272.4px" width="11" height="10" viewBox="0 0 11 10"><path d="M7.2 1.5 H2 C1.2 1.5 0.7 2 0.7 2.8 V7.6 C0.7 8.4 1.2 8.9 2 8.9 H6.8 C7.6 8.9 8.1 8.4 8.1 7.6 V5.8" stroke="#596171" stroke-width="1" fill="none"/><path d="M9.6 0.4 L10.8 1.6 L5.6 6.8 L3.5 7.5 L4.2 5.4Z" fill="#596171"/><path d="M4.2 5.4 L5.6 6.8" stroke="#fff" stroke-width="0.5"/></svg>
<svg class="r" style="left:168px;top:272px" width="9" height="10" viewBox="0 0 9 10"><g transform="translate(0,0.8)"><path d="M2.4 2.5 C2.7 1.1 3.4 0.5 4.4 0.5 C5.4 0.5 6.1 1.1 6.4 2.5" stroke="#596171" stroke-width="1" fill="none"/><path d="M0.3 2.9 H8.5" stroke="#596171" stroke-width="1.2"/><path d="M1.3 3.3 V8.7 C1.3 9.1 1.6 9.4 2 9.4 H6.8 C7.2 9.4 7.5 9.1 7.5 8.7 V3.3" stroke="#596171" stroke-width="1" fill="#cfd6e0"/><path d="M4.4 4.4 V8.4" stroke="#8a93a3" stroke-width="0.8"/></g></svg>
<div class="t" style="left:190.90px;top:273.49px;font-size:9.97px;line-height:14px;color:#6e6e6e;font-weight:400;font-family:'Liberation Sans', sans-serif;letter-spacing:-0.057px;transform:scaleX(0.8772);transform-origin:0 0;">07/06/2018 4:59:00</div>
<div class="t" style="left:290.90px;top:273.49px;font-size:9.97px;line-height:14px;color:#6e6e6e;font-weight:400;font-family:'Liberation Sans', sans-serif;letter-spacing:-0.057px;transform:scaleX(0.8772);transform-origin:0 0;">000158</div>
<div class="t" style="left:335.90px;top:273.49px;font-size:9.97px;line-height:14px;color:#6e6e6e;font-weight:400;font-family:'Liberation Sans', sans-serif;letter-spacing:-0.057px;transform:scaleX(0.8772);transform-origin:0 0;">Porcelain Fused to Metal ...</div>
<div class="t" style="left:453.90px;top:273.49px;font-size:9.97px;line-height:14px;color:#6e6e6e;font-weight:400;font-family:'Liberation Sans', sans-serif;letter-spacing:-0.057px;transform:scaleX(0.8772);transform-origin:0 0;">80</div>
<div class="t" style="left:509.90px;top:273.49px;font-size:9.97px;line-height:14px;color:#6e6e6e;font-weight:400;font-family:'Liberation Sans', sans-serif;letter-spacing:-0.057px;transform:scaleX(0.8772);transform-origin:0 0;">Delivered</div>
<div class="t" style="left:566.90px;top:273.49px;font-size:9.97px;line-height:14px;color:#6e6e6e;font-weight:400;font-family:'Liberation Sans', sans-serif;letter-spacing:-0.057px;transform:scaleX(0.8772);transform-origin:0 0;">1 Days</div>
<div class="t" style="left:755.90px;top:273.49px;font-size:9.97px;line-height:14px;color:#6e6e6e;font-weight:400;font-family:'Liberation Sans', sans-serif;letter-spacing:0.342px;transform:scaleX(0.8772);transform-origin:0 0;">administrator</div>
<div class="t" style="left:831.90px;top:273.49px;font-size:9.97px;line-height:14px;color:#6e6e6e;font-weight:400;font-family:'Liberation Sans', sans-serif;letter-spacing:-0.057px;transform:scaleX(0.8772);transform-origin:0 0;">Ahmed Salem</div>
<div class="t" style="left:918.90px;top:273.49px;font-size:9.97px;line-height:14px;color:#6e6e6e;font-weight:400;font-family:'Liberation Sans', sans-serif;letter-spacing:-0.057px;transform:scaleX(0.8772);transform-origin:0 0;">Zahra Mohamed</div>
<div class="r" style="left:141px;top:288px;width:860px;height:19px;background:#f9f9f9"></div>
<div class="r" style="left:185px;top:288px;width:1px;height:19px;background:#e4e4e4"></div>
<div class="r" style="left:285px;top:288px;width:1px;height:19px;background:#e4e4e4"></div>
<div class="r" style="left:330px;top:288px;width:1px;height:19px;background:#e4e4e4"></div>
<div class="r" style="left:448px;top:288px;width:1px;height:19px;background:#e4e4e4"></div>
<div class="r" style="left:504px;top:288px;width:1px;height:19px;background:#e4e4e4"></div>
<div class="r" style="left:561px;top:288px;width:1px;height:19px;background:#e4e4e4"></div>
<div class="r" style="left:637px;top:288px;width:1px;height:19px;background:#e4e4e4"></div>
<div class="r" style="left:694px;top:288px;width:1px;height:19px;background:#e4e4e4"></div>
<div class="r" style="left:750px;top:288px;width:1px;height:19px;background:#e4e4e4"></div>
<div class="r" style="left:826px;top:288px;width:1px;height:19px;background:#e4e4e4"></div>
<div class="r" style="left:913px;top:288px;width:1px;height:19px;background:#e4e4e4"></div>
<svg class="r" style="left:150px;top:291.4px" width="11" height="10" viewBox="0 0 11 10"><path d="M7.2 1.5 H2 C1.2 1.5 0.7 2 0.7 2.8 V7.6 C0.7 8.4 1.2 8.9 2 8.9 H6.8 C7.6 8.9 8.1 8.4 8.1 7.6 V5.8" stroke="#596171" stroke-width="1" fill="none"/><path d="M9.6 0.4 L10.8 1.6 L5.6 6.8 L3.5 7.5 L4.2 5.4Z" fill="#596171"/><path d="M4.2 5.4 L5.6 6.8" stroke="#fff" stroke-width="0.5"/></svg>
<svg class="r" style="left:168px;top:291px" width="9" height="10" viewBox="0 0 9 10"><g transform="translate(0,0.8)"><path d="M2.4 2.5 C2.7 1.1 3.4 0.5 4.4 0.5 C5.4 0.5 6.1 1.1 6.4 2.5" stroke="#596171" stroke-width="1" fill="none"/><path d="M0.3 2.9 H8.5" stroke="#596171" stroke-width="1.2"/><path d="M1.3 3.3 V8.7 C1.3 9.1 1.6 9.4 2 9.4 H6.8 C7.2 9.4 7.5 9.1 7.5 8.7 V3.3" stroke="#596171" stroke-width="1" fill="#cfd6e0"/><path d="M4.4 4.4 V8.4" stroke="#8a93a3" stroke-width="0.8"/></g></svg>
<div class="t" style="left:190.90px;top:292.38px;font-size:9.97px;line-height:14px;color:#3232ee;font-weight:400;font-family:'Liberation Sans', sans-serif;letter-spacing:-0.057px;transform:scaleX(0.8772);transform-origin:0 0;">04/06/2018 2:14:03</div>
<div class="t" style="left:290.90px;top:292.38px;font-size:9.97px;line-height:14px;color:#3232ee;font-weight:400;font-family:'Liberation Sans', sans-serif;letter-spacing:-0.057px;transform:scaleX(0.8772);transform-origin:0 0;">Pay</div>
<div class="t" style="left:335.90px;top:292.38px;font-size:9.97px;line-height:14px;color:#3232ee;font-weight:400;font-family:'Liberation Sans', sans-serif;letter-spacing:-0.057px;transform:scaleX(0.8772);transform-origin:0 0;">Payment</div>
<div class="t" style="left:642.90px;top:292.38px;font-size:9.97px;line-height:14px;color:#3232ee;font-weight:400;font-family:'Liberation Sans', sans-serif;letter-spacing:-0.057px;transform:scaleX(0.8772);transform-origin:0 0;">10</div>
<div class="t" style="left:699.90px;top:292.38px;font-size:9.97px;line-height:14px;color:#3232ee;font-weight:400;font-family:'Liberation Sans', sans-serif;letter-spacing:-0.057px;transform:scaleX(0.8772);transform-origin:0 0;">Cash</div>
<div class="t" style="left:755.90px;top:292.38px;font-size:9.97px;line-height:14px;color:#3232ee;font-weight:400;font-family:'Liberation Sans', sans-serif;letter-spacing:0.342px;transform:scaleX(0.8772);transform-origin:0 0;">administrator</div>
<div class="r" style="left:185px;top:307px;width:1px;height:127px;background:#e4e4e4"></div>
<div class="r" style="left:143px;top:172px;width:24px;height:22px;border:3px solid #e5151c;box-sizing:border-box"></div>
<div class="r" style="left:141px;top:434px;width:876px;height:47px;background:#f3f3f3;border-top:1px solid #dcdcdc;border-bottom:1px solid #dcdcdc;box-sizing:border-box"></div>
<div class="r" style="left:185px;top:434px;width:1px;height:47px;background:#dcdcdc"></div>
<div class="r" style="left:285px;top:434px;width:1px;height:47px;background:#dcdcdc"></div>
<div class="r" style="left:330px;top:434px;width:1px;height:47px;background:#dcdcdc"></div>
<div class="r" style="left:448px;top:434px;width:1px;height:47px;background:#dcdcdc"></div>
<div class="r" style="left:504px;top:434px;width:1px;height:47px;background:#dcdcdc"></div>
<div class="r" style="left:561px;top:434px;width:1px;height:47px;background:#dcdcdc"></div>
<div class="r" style="left:637px;top:434px;width:1px;height:47px;background:#dcdcdc"></div>
<div class="r" style="left:694px;top:434px;width:1px;height:47px;background:#dcdcdc"></div>
<div class="r" style="left:750px;top:434px;width:1px;height:47px;background:#dcdcdc"></div>
<div class="r" style="left:826px;top:434px;width:1px;height:47px;background:#dcdcdc"></div>
<div class="r" style="left:913px;top:434px;width:1px;height:47px;background:#dcdcdc"></div>
<div class="r" style="left:1003px;top:434px;width:1px;height:47px;background:#dcdcdc"></div>
<div class="t" style="left:335.90px;top:451.95px;font-size:9.94px;line-height:14px;color:#555;font-weight:700;font-family:'Liberation Sans', sans-serif;letter-spacing:0.000px;transform:scaleX(0.8850);transform-origin:0 0;">Total</div>
<div class="t" style="left:453.50px;top:452.03px;font-size:9.72px;line-height:14px;color:#555;font-weight:700;font-family:'Liberation Sans', sans-serif;letter-spacing:0.000px;transform:scaleX(0.8850);transform-origin:0 0;">360.00</div>
<div class="t" style="left:642.50px;top:452.03px;font-size:9.72px;line-height:14px;color:#555;font-weight:700;font-family:'Liberation Sans', sans-serif;letter-spacing:0.000px;transform:scaleX(0.8850);transform-origin:0 0;">515.00</div>
<div class="t" style="left:832.00px;top:438.55px;font-size:9.94px;line-height:14px;color:#555;font-weight:700;font-family:'Liberation Sans', sans-serif;letter-spacing:0.000px;transform:scaleX(0.8850);transform-origin:0 0;">Balance</div>
<div class="t" style="left:832.00px;top:464.35px;font-size:9.94px;line-height:14px;color:#555;font-weight:700;font-family:'Liberation Sans', sans-serif;letter-spacing:0.000px;transform:scaleX(0.8850);transform-origin:0 0;">Total Balance</div>
<div class="t" style="left:919.00px;top:438.63px;font-size:9.72px;line-height:14px;color:#555;font-weight:700;font-family:'Liberation Sans', sans-serif;letter-spacing:0.000px;transform:scaleX(0.8850);transform-origin:0 0;">-155.00</div>
<div class="t" style="left:919.00px;top:464.43px;font-size:9.72px;line-height:14px;color:#555;font-weight:700;font-family:'Liberation Sans', sans-serif;letter-spacing:0.000px;transform:scaleX(0.8850);transform-origin:0 0;">35.00</div>
</body></html>
